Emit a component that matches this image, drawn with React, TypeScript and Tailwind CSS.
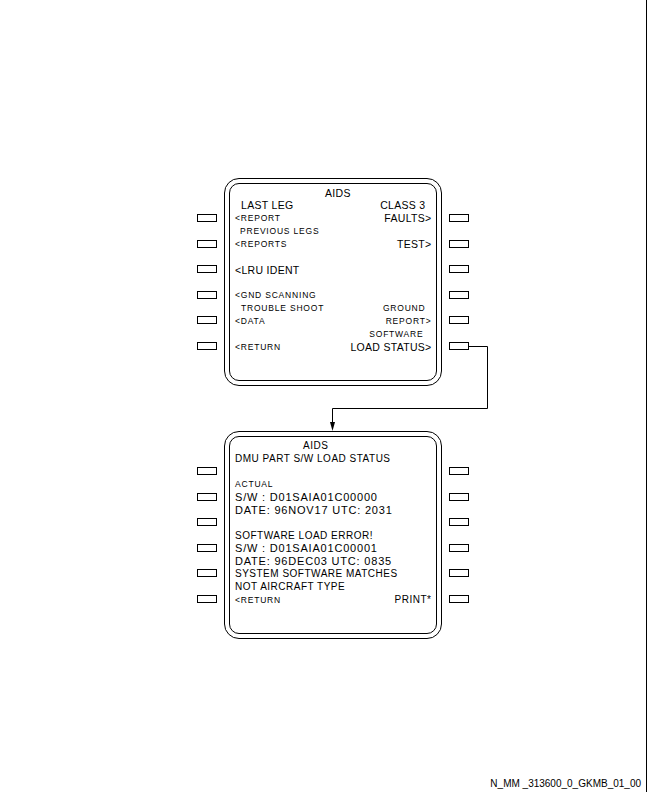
import React from 'react';

type Cell = { t: string; c: string };
type Row = { l?: Cell; r?: Cell };

const SM = 'text-[8.5px] tracking-[0.8px]';
const MD = 'text-[10px] tracking-[0.5px]';
const LG = 'text-[10.5px] tracking-[0.3px]';
const XL = 'text-[11px] tracking-[0.8px]';

const TOP_ROWS: Row[] = [
  { l: { t: 'AIDS', c: `${LG} pl-[90px]` } },
  { l: { t: 'LAST LEG', c: `${LG} pl-[6px]` }, r: { t: 'CLASS 3', c: `${LG} pr-[6px]` } },
  { l: { t: '<REPORT', c: SM }, r: { t: 'FAULTS>', c: LG } },
  { l: { t: 'PREVIOUS LEGS', c: `${SM} pl-[5px]` } },
  { l: { t: '<REPORTS', c: SM }, r: { t: 'TEST>', c: LG } },
  {},
  { l: { t: '<LRU IDENT', c: LG } },
  {},
  { l: { t: '<GND SCANNING', c: SM } },
  { l: { t: 'TROUBLE SHOOT', c: `${SM} pl-[6px]` }, r: { t: 'GROUND', c: `${SM} pr-[6px]` } },
  { l: { t: '<DATA', c: SM }, r: { t: 'REPORT>', c: SM } },
  { r: { t: 'SOFTWARE', c: `${SM} pr-[8px]` } },
  { l: { t: '<RETURN', c: SM }, r: { t: 'LOAD STATUS>', c: LG } },
];

const BOTTOM_ROWS: Row[] = [
  { l: { t: 'AIDS', c: `${MD} pl-[68px]` } },
  { l: { t: 'DMU PART S/W LOAD STATUS', c: MD } },
  {},
  { l: { t: 'ACTUAL', c: SM } },
  { l: { t: 'S/W : D01SAIA01C00000', c: XL } },
  { l: { t: 'DATE: 96NOV17 UTC: 2031', c: XL } },
  {},
  { l: { t: 'SOFTWARE LOAD ERROR!', c: MD } },
  { l: { t: 'S/W : D01SAIA01C00001', c: XL } },
  { l: { t: 'DATE: 96DEC03 UTC: 0835', c: XL } },
  { l: { t: 'SYSTEM SOFTWARE MATCHES', c: MD } },
  { l: { t: 'NOT AIRCRAFT TYPE', c: MD } },
  { l: { t: '<RETURN', c: SM }, r: { t: 'PRINT*', c: MD } },
];

function Keys() {
  return (
    <div className="flex w-[20px] flex-col gap-[17.6px] pt-[36px]">
      {[0, 1, 2, 3, 4, 5].map(i => (
        <div key={i} className="h-[8px] w-[20px] border border-black bg-white" />
      ))}
    </div>
  );
}

function Unit({ rows }: { rows: Row[] }) {
  return (
    <div className="flex pl-[197px]">
      <Keys />
      <div className="ml-[7px] mr-[7px] h-[208px] w-[218px] rounded-[15px] border-[1.5px] border-black p-[4px]">
        <div className="h-full rounded-[10px] border border-black pl-[5px] pr-[4.5px] pt-[2.5px]">
          {rows.map((row, i) => (
            <div key={i} className="flex h-[12.83px] items-center justify-between whitespace-pre leading-none">
              <span className={row.l ? row.l.c : ''}>{row.l ? row.l.t : ''}</span>
              <span className={row.r ? row.r.c : ''}>{row.r ? row.r.t : ''}</span>
            </div>
          ))}
        </div>
      </div>
      <Keys />
    </div>
  );
}

export default function App() {
  return (
    <div
      className="relative flex h-[792px] w-[647px] flex-col border-r border-black bg-white text-black"
      style={{ fontFamily: '"Liberation Sans", Arial, sans-serif' }}
    >
      <div className="flex flex-col gap-[45px] pt-[178px]">
        <Unit rows={TOP_ROWS} />
        <Unit rows={BOTTOM_ROWS} />
      </div>

      {/* connector from LOAD STATUS key to lower display */}
      <svg className="pointer-events-none absolute left-0 top-0" width="647" height="792">
        <polyline points="469,346.5 487.5,346.5 487.5,408.5 332.5,408.5 332.5,424" fill="none" stroke="black" strokeWidth="1" />
        <polygon points="330,422 335,422 332.5,431" fill="black" />
      </svg>

      <div className="mt-auto flex justify-end pb-[2px] pr-[5px] text-[10px] leading-[12px]">
        N_MM _313600_0_GKMB_01_00
      </div>
    </div>
  );
}
